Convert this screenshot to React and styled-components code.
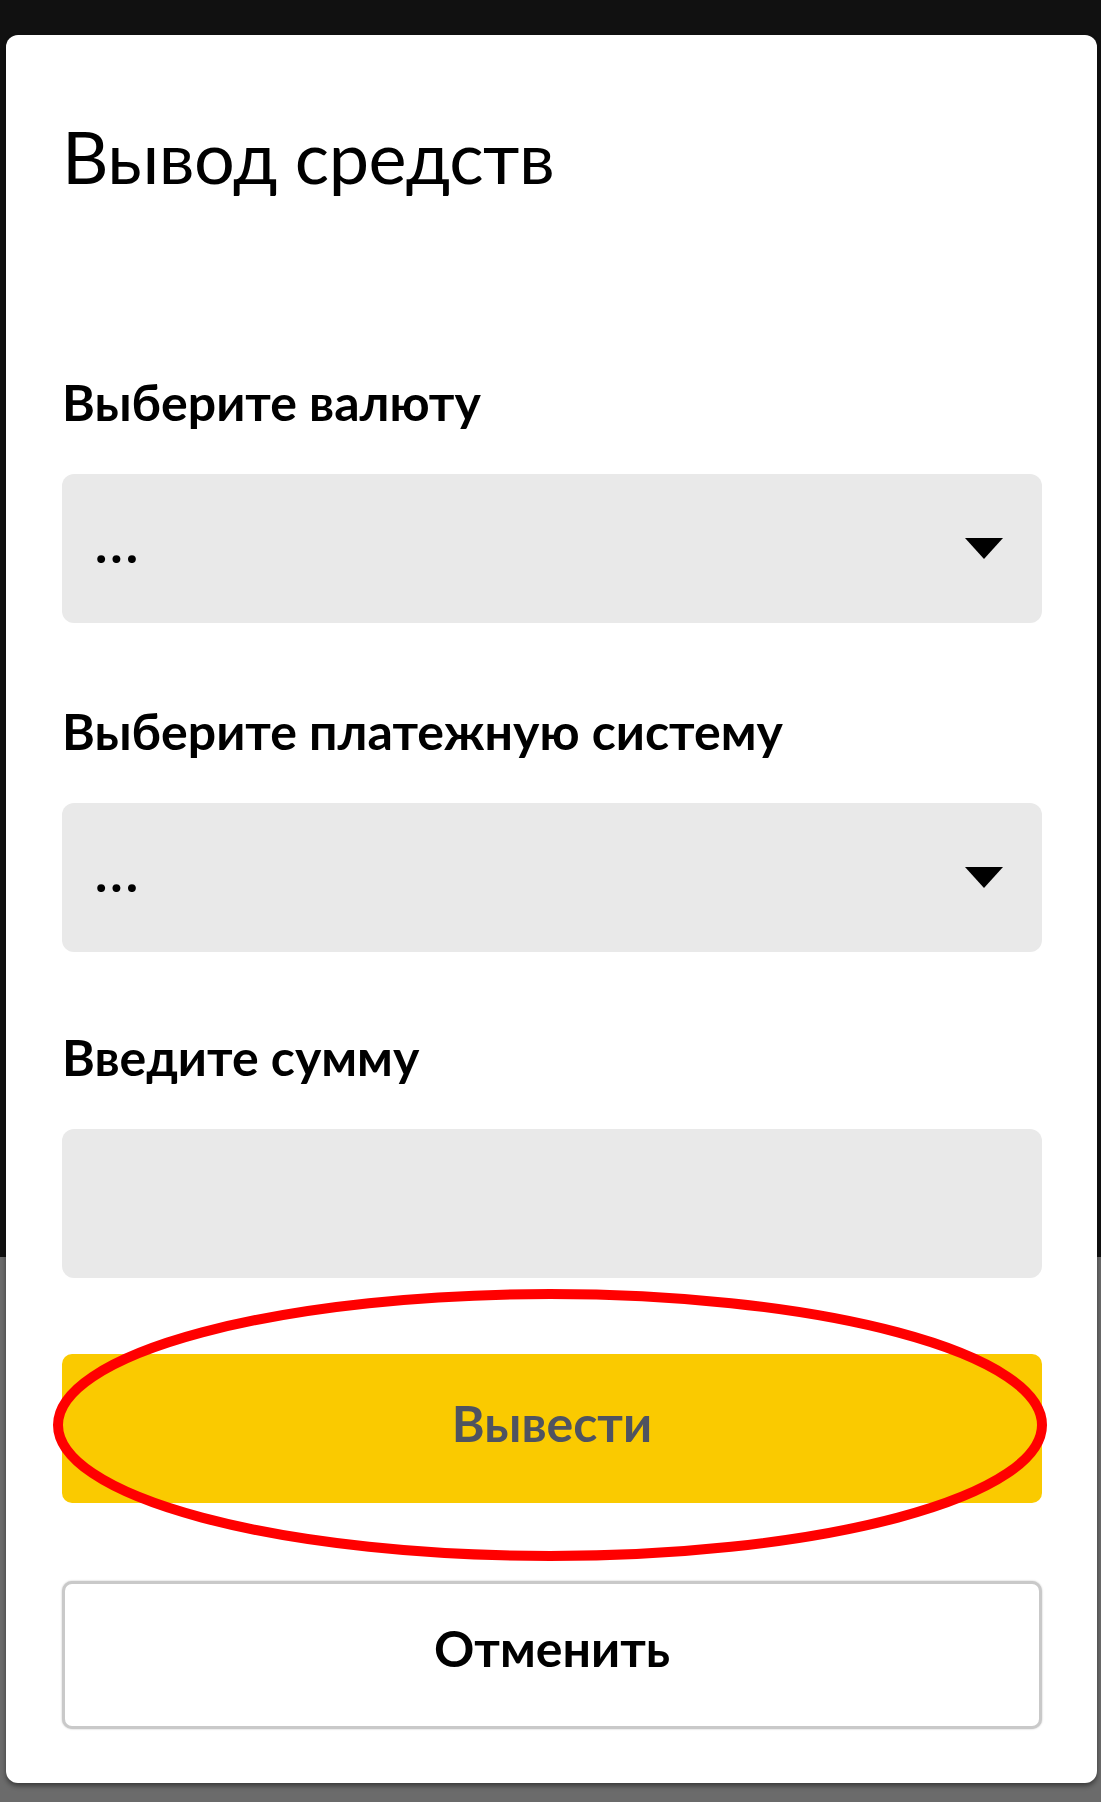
import React from 'react';
import styled, { createGlobalStyle } from 'styled-components';

const GlobalStyle = createGlobalStyle`
  html, body {
    margin: 0;
    padding: 0;
  }
  body {
    background: linear-gradient(to bottom, #111111 0, #111111 1257px, #6b6b6b 1257px);
    min-height: 1802px;
    font-family: Lato, "Noto Sans", sans-serif;
    color: #000;
  }
`;

const Page = styled.div`
  padding: 35px 4px 19px 6px;
`;

const Card = styled.div`
  position: relative;
  height: 1748px;
  box-sizing: border-box;
  background: #fff;
  border-radius: 12px;
  box-shadow: 0 3px 5px rgba(0, 0, 0, 0.45);
  padding: 84px 55px 0 56px;
  display: flex;
  flex-direction: column;
`;

const Title = styled.h1`
  margin: 0 0 183px;
  font-size: 72px;
  line-height: 74px;
  font-weight: 400;
  letter-spacing: -0.5px;
`;

const Field = styled.div`
  display: flex;
  flex-direction: column;
  margin-bottom: ${p => p.gap}px;
`;

const Label = styled.div`
  font-size: 50px;
  line-height: 52px;
  font-weight: 700;
  margin-bottom: 46px;
`;

const Box = styled.div`
  height: 149px;
  box-sizing: border-box;
  background: #e9e9e9;
  border-radius: 12px;
  display: flex;
  align-items: center;
  justify-content: space-between;
  padding: 0 39px 0 33px;
`;

const Dots = styled.span`
  font-size: 52px;
  line-height: 52px;
  font-weight: 700;
  letter-spacing: 3px;
  padding-bottom: 12px;
`;

const Caret = styled.span`
  width: 0;
  height: 0;
  border-left: 19px solid transparent;
  border-right: 19px solid transparent;
  border-top: 21px solid #000;
`;

const Button = styled.div`
  height: ${p => p.h}px;
  box-sizing: border-box;
  border-radius: 10px;
  display: flex;
  align-items: center;
  justify-content: center;
  padding-bottom: ${p => (p.primary ? 12 : 14)}px;
  font-size: 50px;
  line-height: 52px;
  font-weight: 700;
  background: ${p => (p.primary ? '#faca00' : '#fff')};
  color: ${p => (p.primary ? '#4f5360' : '#000')};
  border: ${p => (p.primary ? 'none' : '3px solid #c9c9c9')};
  box-shadow: ${p => (p.primary ? 'none' : '0 0 2px rgba(0,0,0,0.25)')};
  margin-bottom: ${p => p.gap || 0}px;
`;

const Mark = styled.svg`
  position: absolute;
  left: 0;
  top: 0;
  overflow: visible;
  pointer-events: none;
`;

const App = () => {
  return (
    <>
      <GlobalStyle />
      <Page>
        <Card>
          <Title>Вывод средств</Title>
          <Field gap={82}>
            <Label>Выберите валюту</Label>
            <Box>
              <Dots>...</Dots>
              <Caret />
            </Box>
          </Field>
          <Field gap={79}>
            <Label>Выберите платежную систему</Label>
            <Box>
              <Dots>...</Dots>
              <Caret />
            </Box>
          </Field>
          <Field gap={76}>
            <Label>Введите сумму</Label>
            <Box />
          </Field>
          <Button primary h={149} gap={78}>Вывести</Button>
          <Button h={148}>Отменить</Button>
          <Mark width="1" height="1">
            <ellipse cx="544" cy="1390" rx="492" ry="131" fill="none" stroke="#ff0000" strokeWidth="10" />
          </Mark>
        </Card>
      </Page>
    </>
  );
};

export default App;
